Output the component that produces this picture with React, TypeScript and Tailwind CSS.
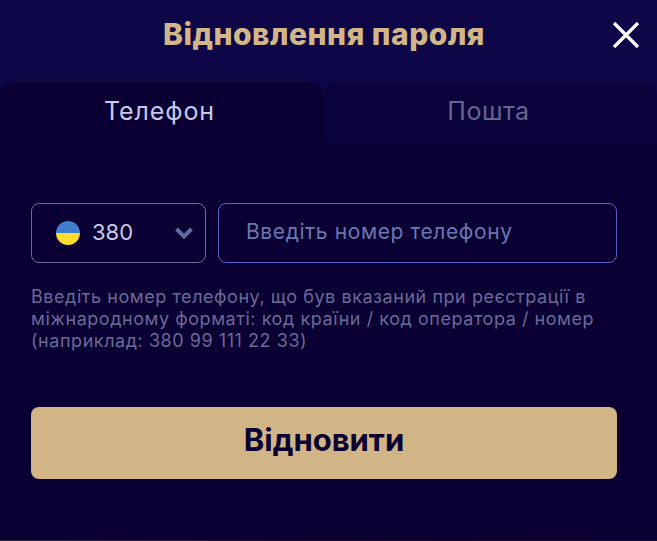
import React from 'react';

export default function App() {
  return (
    <div className="w-[657px] h-[541px] overflow-hidden bg-[#0d0647] font-['Inter',sans-serif]">
      {/* шапка */}
      <div className="relative h-[82px] pt-[14px] pr-[9px] text-center">
        <h1 className="text-[30px] leading-[40px] font-extrabold text-[#d3b688] tracking-[0.5px]">Відновлення пароля</h1>
        <button className="absolute right-[17px] top-[21px] text-white">
          <svg width="28" height="28" viewBox="0 0 28 28" fill="none" stroke="currentColor" strokeWidth="3.2">
            <path d="M2 2 L26 26 M26 2 L2 26" />
          </svg>
        </button>
      </div>

      {/* вкладки */}
      <div className="flex h-[61px]">
        <div className="w-[324px] rounded-t-[14px] bg-[#0a0033] pr-[5px] text-center text-[25px] leading-[58px] tracking-[0.9px] text-[#c9c9e6]">Телефон</div>
        <div className="flex-1 rounded-t-[14px] bg-[#0b043c] pr-[4px] text-center text-[25px] leading-[58px] tracking-[0.5px] text-[#68648f]">Пошта</div>
      </div>

      <div className="h-[397px] bg-[#0a0033] pl-[31px] pr-[40px] pt-[60px]">
        <div className="flex gap-[12px]">
          <div className="flex h-[60px] w-[175px] items-center rounded-[8px] border border-[#6d6a9c] pl-[24px] pr-[12px]">
            <div className="h-6 w-6 overflow-hidden rounded-full">
              <div className="h-3 bg-[#3f7fce]" />
              <div className="h-3 bg-[#fbdc2c]" />
            </div>
            <span className="ml-[12px] pb-[2px] text-[22px] text-[#c9c9e6]">380</span>
            <svg className="ml-auto" width="18" height="12" viewBox="0 0 18 12" fill="none" stroke="#5f6b9c" strokeWidth="4">
              <path d="M1.5 2 L9 9.5 L16.5 2" />
            </svg>
          </div>
          <div className="flex h-[60px] flex-1 items-center rounded-[8px] border border-[#5b5fc0] pb-[2px] pl-[27px] text-[21px] tracking-[0.6px] text-[#6b78b0]">
            Введіть номер телефону
          </div>
        </div>

        <p className="mt-[23px] w-[590px] text-[18px] leading-[22px] tracking-[0.55px] text-[#6a6a95]">
          Введіть номер телефону, що був вказаний при реєстрації в міжнародному форматі: код країни / код оператора / номер (наприклад: 380 99 111 22 33)
        </p>

        <button className="mt-[55px] h-[72px] w-[586px] rounded-[8px] bg-[#d1b586] pb-[5px] text-[31px] font-bold text-[#0a0033]">Відновити</button>
      </div>
      <div className="h-px bg-linear-to-r from-[#2b2938] via-[#1c0a28] to-[#14102c]" />
    </div>
  );
}
